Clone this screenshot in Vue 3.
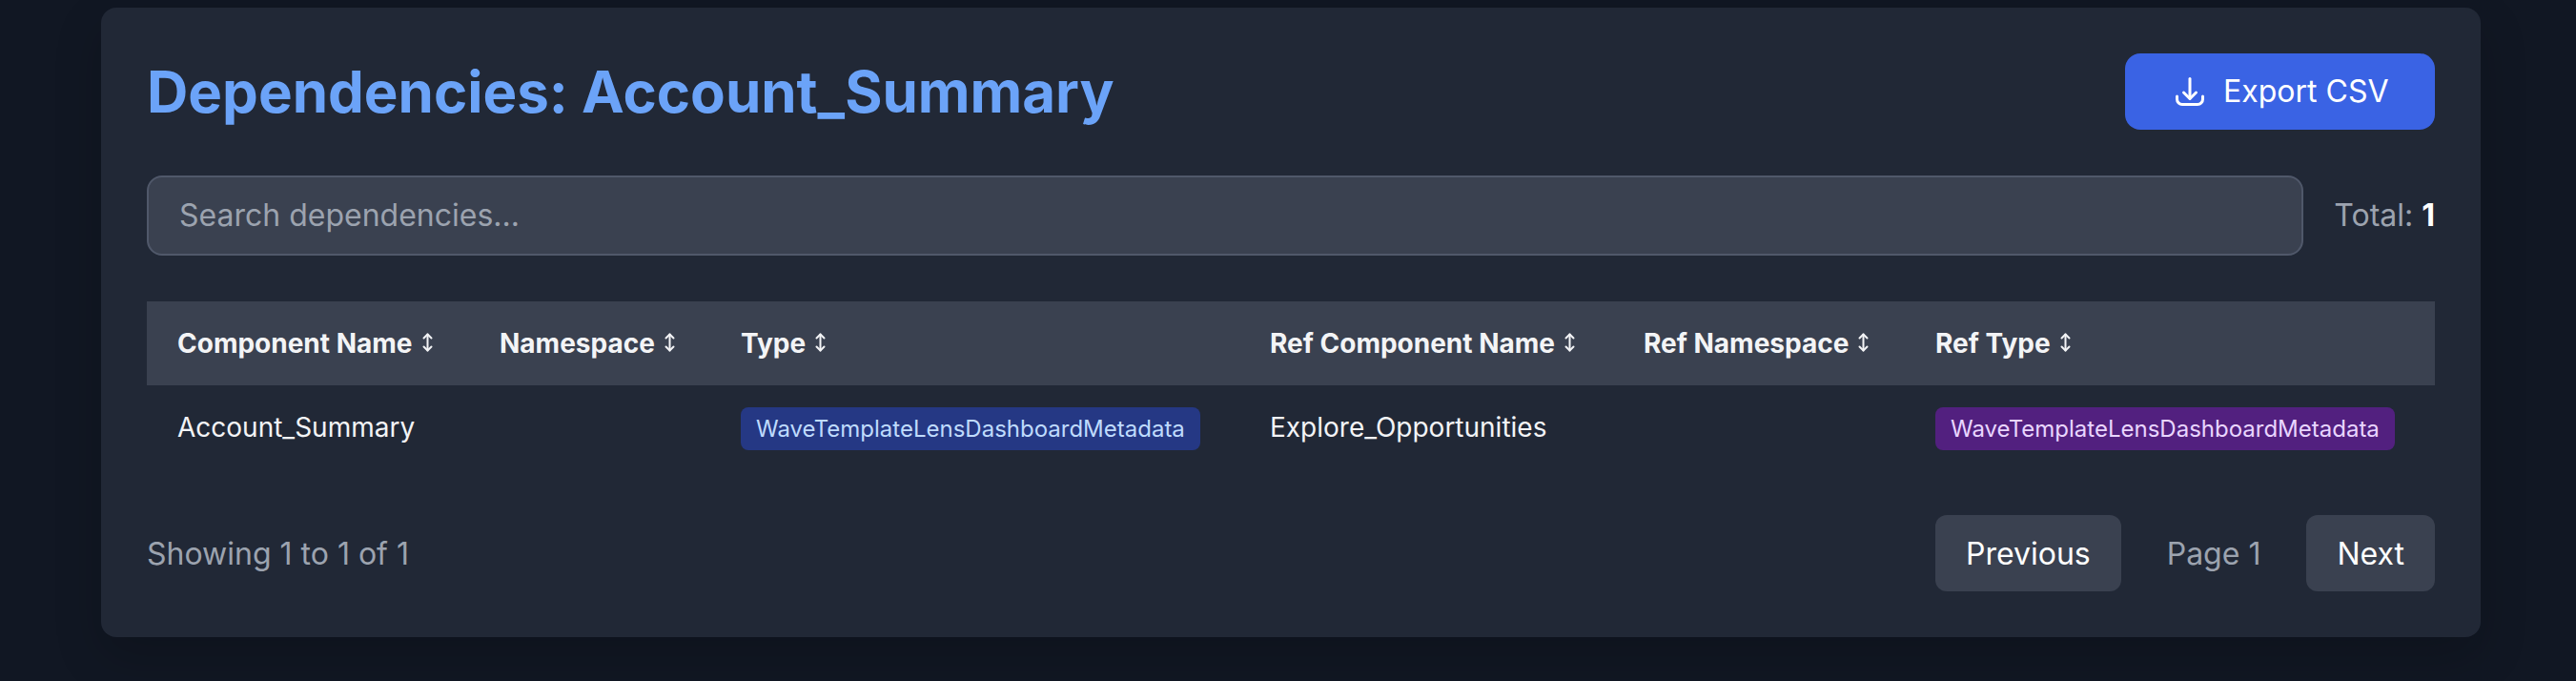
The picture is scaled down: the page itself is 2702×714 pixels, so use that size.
<script setup>
const columns = [
  { label: 'Component Name', cls: 'c1' },
  { label: 'Namespace', cls: 'c2' },
  { label: 'Type', cls: 'c3' },
  { label: 'Ref Component Name', cls: 'c4' },
  { label: 'Ref Namespace', cls: 'c5' },
  { label: 'Ref Type', cls: 'c6' },
]
</script>

<template>
  <div class="page">
    <main class="panel">
      <header class="top">
        <h1>Dependencies: Account_Summary</h1>
        <button class="export">
          <svg width="30" height="30" viewBox="0 0 30 30" fill="none" stroke="currentColor" stroke-width="3" stroke-linecap="round" stroke-linejoin="round">
            <path d="M15 1.5V22" />
            <path d="M8.5 16l6.5 6.5 6.5-6.5" />
            <path d="M1.5 20v3a5.5 5.5 0 0 0 5.5 5.5h16a5.5 5.5 0 0 0 5.5-5.5v-3" />
          </svg>
          Export CSV
        </button>
      </header>

      <div class="filter">
        <input class="search" placeholder="Search dependencies..." />
        <span class="total">Total: <b>1</b></span>
      </div>

      <table>
        <thead>
          <tr>
            <th v-for="c in columns" :key="c.label" :class="c.cls">
              <span class="head">
                {{ c.label }}
                <svg class="sort" width="11" height="20" viewBox="0 0 11 20" fill="none" stroke="currentColor" stroke-width="2" stroke-linecap="round" stroke-linejoin="round">
                  <path d="M5.5 1.5v17" />
                  <path d="M1.5 5.5l4-4 4 4" />
                  <path d="M1.5 14.5l4 4 4-4" />
                </svg>
              </span>
            </th>
          </tr>
        </thead>
        <tbody>
          <tr>
            <td>Account_Summary</td>
            <td></td>
            <td><span class="badge blue">WaveTemplateLensDashboardMetadata</span></td>
            <td>Explore_Opportunities</td>
            <td></td>
            <td><span class="badge purple">WaveTemplateLensDashboardMetadata</span></td>
          </tr>
        </tbody>
      </table>

      <footer class="foot">
        <span class="muted">Showing 1 to 1 of 1</span>
        <div class="pager">
          <button class="pg">Previous</button>
          <span class="muted">Page 1</span>
          <button class="pg">Next</button>
        </div>
      </footer>
    </main>
  </div>
</template>

<style>
html, body { margin: 0; background: #111723; }
</style>

<style scoped>
.page {
  height: 714px;
  box-sizing: border-box;
  padding: 8px 100px 0 106px;
  background: #111723;
  overflow: hidden;
  font-family: Inter, "Liberation Sans", sans-serif;
}
.panel {
  box-sizing: border-box;
  width: 2496px;
  height: 660px;
  padding: 48px;
  background: #212836;
  border-radius: 16px;
  box-shadow: 0 20px 50px rgba(0, 0, 0, 0.18);
}
.top {
  display: flex;
  align-items: center;
  justify-content: space-between;
  height: 80px;
  margin-bottom: 48px;
}
h1 {
  margin: 0;
  font-size: 60px;
  line-height: 72px;
  font-weight: 700;
  color: #6ba3f8;
}
.export {
  display: flex;
  align-items: center;
  gap: 20px;
  box-sizing: border-box;
  width: 325px;
  height: 80px;
  padding: 0 0 0 53px;
  border: 0;
  border-radius: 16px;
  background: #3a63e4;
  color: #fff;
  font: 400 32px/48px Inter, sans-serif;
}
.filter {
  display: flex;
  align-items: center;
  gap: 32px;
  margin-bottom: 48px;
}
.search {
  flex: 1;
  box-sizing: border-box;
  height: 84px;
  padding: 0 32px 2px;
  border: 2px solid #50586a;
  border-radius: 16px;
  background: #3a4150;
  color: #fff;
  font: 400 32px Inter, sans-serif;
  outline: none;
}
.search::placeholder { color: #9ca3af; opacity: 1; }
.total { margin-bottom: 2px; font-size: 32px; color: #9ca3af; white-space: nowrap; }
.total b { color: #fff; font-weight: 700; }
table {
  width: 2400px;
  table-layout: fixed;
  border-collapse: collapse;
}
th {
  height: 88px;
  padding: 0 32px;
  box-sizing: border-box;
  background: #3a4150;
  color: #f3f4f6;
  font-size: 28px;
  font-weight: 700;
  line-height: 40px;
  text-align: left;
  white-space: nowrap;
}
.head {
  display: flex;
  align-items: center;
  gap: 10px;
}
.sort { margin-top: -3px; }
.c1 { width: 338px; }
.c2 { width: 253px; }
.c3 { width: 555px; }
.c4 { width: 392px; }
.c5 { width: 306px; }
.c6 { width: 556px; }
td {
  height: 88px;
  padding: 0 32px;
  box-sizing: border-box;
  color: #f3f4f6;
  font-size: 28px;
  line-height: 40px;
  white-space: nowrap;
}
.badge {
  display: inline-block;
  margin-top: 3px;
  padding: 6px 16px;
  border-radius: 8px;
  font-size: 24px;
  line-height: 33px;
  vertical-align: middle;
}
.blue { background: #253884; color: #bfdbfe; }
.purple { background: #52207f; color: #e9d5ff; }
.foot {
  display: flex;
  align-items: center;
  justify-content: space-between;
  margin-top: 48px;
}
.muted { font-size: 32px; color: #9ca3af; }
.pager {
  display: flex;
  align-items: center;
  gap: 48px;
}
.pg {
  height: 80px;
  padding: 0 32px;
  border: 0;
  border-radius: 12px;
  background: #3a4150;
  color: #fff;
  font: 400 32px Inter, sans-serif;
}
</style>
